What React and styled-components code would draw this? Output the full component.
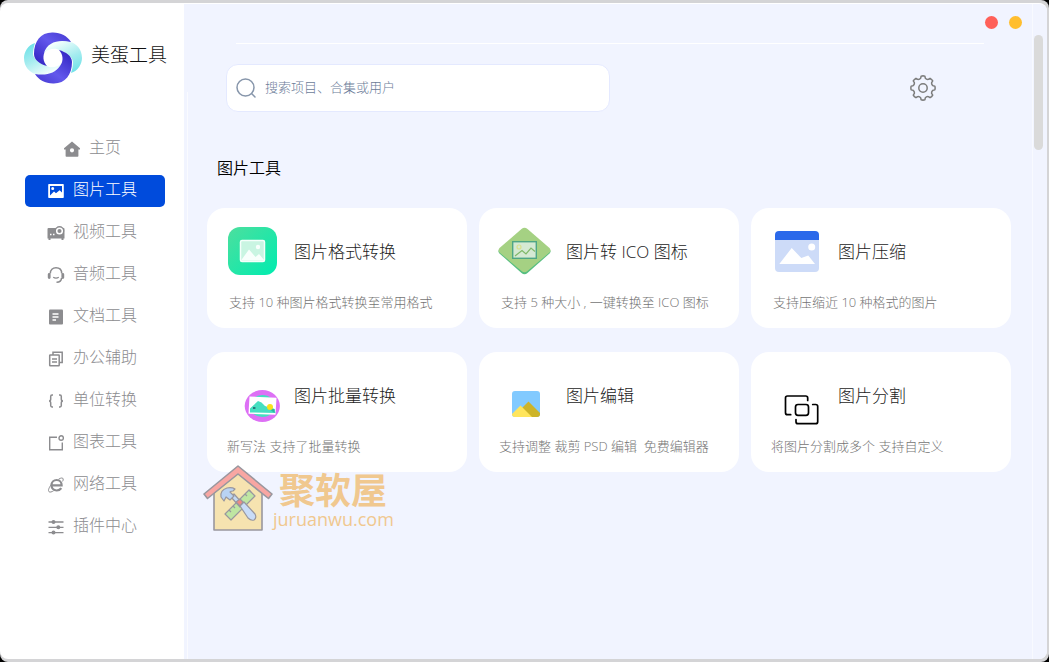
import styled, { createGlobalStyle } from "styled-components";

const GlobalStyle = createGlobalStyle`
  * {
    box-sizing: border-box;
  }
  body {
    margin: 0;
    background: #000;
    font-family: "Open Sans", "Noto Sans CJK SC", sans-serif;
    font-weight: 300;
  }
  button, input {
    font: inherit;
    border: 0;
    padding: 0;
    background: none;
  }
`;

/* sidebar icons */

const HomeIcon = () => (
  <svg width="16" height="16" viewBox="0 0 16 16">
    <path
      fill="currentColor"
      fillRule="evenodd"
      d="M8 .5 16 7.2v1.2h-1.6V15q0 .8-.8.8H2.4q-.8 0-.8-.8V8.400H0V7.200zM8 7.200a2.100 2.100 0 1 0 0 4.200 2.100 2.100 0 0 0 0-4.200z"
    />
  </svg>
);

const PictureIcon = () => (
  <svg width="16" height="16" viewBox="0 0 16 16">
    <path
      fill="currentColor"
      fillRule="evenodd"
      d="M1 1h14q.8 0 .8.8v12.400q0 .8-.8.8H1q-.8 0-.8-.8V1.800Q.200 1 1 1zM2 3v9.500l4-4 2 1.700 3.600-2.900L14 9.500V3zM4.700 3.900a1.500 1.500 0 1 1 0 3 1.500 1.500 0 0 1 0-3z"
    />
  </svg>
);

const VideoIcon = () => (
  <svg width="18" height="16" viewBox="0 0 18 16">
    <path fill="currentColor" d="M1.500 3h15q1 0 1 1v9.500h-1V15h-2v-1.500h-11V15h-2v-1.500h-1V4q0-1 1-1z" />
    <circle cx="12.500" cy="5.800" r="4.800" fill="currentColor" />
    <circle cx="12.500" cy="6" r="2.800" fill="none" stroke="#fff" strokeWidth="1.500" />
    <path stroke="#fff" strokeWidth="1.400" d="M3 9.500h1.500M6 9.500h1.500" />
  </svg>
);

const AudioIcon = () => (
  <svg width="18" height="16" viewBox="0 0 18 16" fill="none" stroke="currentColor">
    <path strokeWidth="1.500" d="M3.300 6.500C3.300 2.800 5.700.8 9 .8s5.700 2 5.700 5.700M14.500 11c0 2.500-1.500 4.200-5 4.200" />
    <path strokeWidth="1.300" d="M6.200 10.200q2.800 1.800 5.600 0" />
    <path strokeWidth="2.800" strokeLinecap="round" d="M2.200 7.300v3.200M15.800 7.300v3.200" />
  </svg>
);

const DocIcon = () => (
  <svg width="16" height="16" viewBox="0 0 16 16">
    <rect x="1" y=".5" width="14" height="15" rx="1" fill="currentColor" />
    <path stroke="#fff" strokeWidth="1.400" d="M4.500 5h6M4.500 8h6M4.500 11h3.500" />
  </svg>
);

const OfficeIcon = () => (
  <svg width="16" height="16" viewBox="0 0 16 16" fill="none" stroke="currentColor" strokeWidth="1.500">
    <path d="M5 4V1.200h9.200v10.300h-3" />
    <rect x="1.700" y="4" width="9.500" height="10.800" rx=".5" />
    <path d="M4 8h5M4 11h5" />
  </svg>
);

const UnitIcon = () => (
  <svg width="16" height="16" viewBox="0 0 16 16" fill="none" stroke="currentColor" strokeWidth="1.500">
    <path d="M5 2H4q-1.300 0-1.300 1.400v2.500Q2.700 8 1 8q1.700 0 1.700 2.100v2.500Q2.700 14 4 14h1M11 2h1q1.300 0 1.300 1.400v2.500Q13.300 8 15 8q-1.700 0-1.700 2.100v2.500Q13.300 14 12 14h-1" />
  </svg>
);

const ChartIcon = () => (
  <svg width="16" height="16" viewBox="0 0 16 16" fill="none" stroke="currentColor" strokeWidth="1.400">
    <path d="M9 2.200H1.700v12.600h12.600V7.500" />
    <circle cx="13.200" cy="3" r="2.200" />
  </svg>
);

const NetIcon = () => (
  <svg width="16" height="16" viewBox="0 0 16 16" fill="none" stroke="currentColor">
    <path strokeWidth="2.200" d="M4 8.300h9.600C13.600 5 11.500 3 8.700 3 5.700 3 3.500 5.200 3.500 8.300s2.200 5.200 5.200 5.200c2 0 3.600-.8 4.600-2.300" />
    <path strokeWidth="1" d="M10.500 2.300C13 .6 15 .6 15.200 2c.1.800-.2 1.600-.6 2.400M3.700 7C.9 10.500-.2 13.600 1 14.700c.9.800 2.700.3 4.700-1" />
  </svg>
);

const PluginIcon = () => (
  <svg width="16" height="16" viewBox="0 0 16 16">
    <path stroke="currentColor" strokeWidth="1.300" d="M.5 3h15M.5 8.300h15M.5 13.600h15" />
    <g fill="currentColor">
      <circle cx="5.500" cy="3" r="2" />
      <circle cx="10.300" cy="8.300" r="2" />
      <circle cx="5.500" cy="13.600" r="2" />
    </g>
  </svg>
);

const Logo = () => (
  <svg width="58" height="52" viewBox="-29 -26 58 52">
    <defs>
      <linearGradient id="aqua" x1="0" y1="0" x2="0.600" y2="1">
        <stop offset="0" stopColor="#62dfe6" />
        <stop offset="0.500" stopColor="#a5ecef" />
        <stop offset="1" stopColor="#f4fffd" />
      </linearGradient>
      <linearGradient id="indigo" x1="1" y1="0" x2="0.200" y2="1">
        <stop offset="0" stopColor="#4438d0" />
        <stop offset="0.450" stopColor="#6258ec" />
        <stop offset="1" stopColor="#3427c4" />
      </linearGradient>
      <g id="half">
        <path fill="url(#aqua)" d="M-18-15C-25-13-29-6-29 0-29 9-23 15-17 16-6 19 6 16 9 5 4 10-3 10-6 8-14 6-20 0-20-4-20-8-19-12-18-15Z" />
        <path fill="url(#indigo)" d="M-19-4C-19-17-12-26 0-25.500 8-25.500 14-22 18-16 6-18-2-15-7-8-11-3-10 4-6 8-13 6-19 2-19-4Z" />
      </g>
    </defs>
    <use href="#half" />
    <use href="#half" transform="rotate(180)" />
  </svg>
);

const polar = (deg, r) => {
  const rad = (deg * Math.PI) / 180;
  return `${(r * Math.cos(rad)).toFixed(2)} ${(r * Math.sin(rad)).toFixed(2)}`;
};

// eight rounded teeth with a small hollow between each two
const gearPath =
  [0, 45, 90, 135, 180, 225, 270, 315]
    .map(
      (a, i) =>
        `${i ? "L" : "M"}${polar(a - 9, 12)} Q${polar(a, 12.4)} ${polar(a + 9, 12)} ` +
        `L${polar(a + 13, 10.2)} Q${polar(a + 22.5, 9)} ${polar(a + 32, 10.2)}`
    )
    .join(" ") + "Z";

const GearIcon = () => (
  <svg width="26" height="26" viewBox="-13 -13 26 26" fill="none" stroke="#7c7c7c" strokeWidth="1.500" strokeLinejoin="round">
    <path d={gearPath} />
    <circle r="4.200" />
  </svg>
);

/* card pictures, all drawn in the same 56x60 slot */

const FormatArt = () => (
  <>
    <defs>
      <linearGradient id="mint" x1="0" y1="0" x2="1" y2="1">
        <stop offset="0" stopColor="#4ddf9e" />
        <stop offset="1" stopColor="#00ecb0" />
      </linearGradient>
    </defs>
    <rect x="3" y="5" width="49" height="48" rx="12" fill="url(#mint)" />
    <rect x="15.500" y="18.500" width="24" height="21" rx="1.500" fill="#c9f5e2" stroke="#f5fffb" strokeWidth="1.500" />
    <path fill="#f8fffc" d="M16 38.500 24 27.500l6.500 7.500 3.500-3 5.500 6.500z" />
    <circle cx="33" cy="25" r="2.200" fill="#f8fffc" />
  </>
);

const IcoArt = () => (
  <>
    <path fill="#55be80" d="M24.500 8q3-2.500 6 0L52.500 27q2 2.500 0 4.500L30.500 51q-3 2.500-6 0L2.500 31.500q-2-2 0-4.500z" />
    <path fill="#a5d183" d="M24.500 7q3-2.500 6 0L52.500 26q2 2.500 0 4.500L30.500 49q-3 2.500-6 0L2.500 30.500q-2-2 0-4.500z" />
    <rect x="15.700" y="19.700" width="23.600" height="16.600" fill="#d5e9d3" stroke="#4fa685" strokeWidth="1.400" />
    <path fill="none" stroke="#7fb868" strokeWidth="1.200" d="m18 34 7-5.500 4 3.500 5-6 4 3.500" />
    <circle cx="22" cy="25" r="2" fill="none" stroke="#d9e08b" strokeWidth="1.200" />
  </>
);

const CompressArt = () => (
  <>
    <rect x="6" y="9" width="44" height="20" rx="4" fill="#2b69ea" />
    <path fill="#cddbf8" d="M6 18h44v28q0 4-4 4H10q-4 0-4-4z" />
    <path fill="#fff" d="M10.300 42 22.700 26l9.600 10 7-2.500L46 42z" />
    <circle cx="42.700" cy="25" r="3.500" fill="#fff" />
  </>
);

const BatchArt = () => (
  <>
    <ellipse cx="37.300" cy="40" rx="17.600" ry="16" fill="#dd70f5" />
    <ellipse cx="37.300" cy="40" rx="12.500" ry="11" fill="#45dfc0" />
    <path fill="#fff" d="m24.500 30.500 27 1.200-1 17-27-1z" />
    <path fill="#45dfc0" d="M25 46.500v-4l8-7.500 3.500 1.500 3.500 3.500 3 1 6.500 2 1 4z" />
    <path fill="#2cb8a2" d="m43 42 6.500 1v4z" />
    <circle cx="45" cy="41" r="3" fill="#f9e11c" />
    <path stroke="#17324d" strokeWidth="1.200" d="M28 42h2.500" />
  </>
);

const EditArt = () => (
  <>
    <rect x="15" y="25" width="28" height="26" rx="3" fill="#82caff" />
    <path fill="#cdb429" d="m23 44 8.500-8.500L43 47v1q0 3-3 3H28z" />
    <path fill="#ffe55c" d="m15 48 8.500-8.500L35 51H18q-3 0-3-3z" />
  </>
);

const SplitArt = () => (
  <g fill="none" stroke="#000" strokeWidth="1.700" strokeLinecap="round">
    <path d="M38.700 34.500V32q0-2-2-2H18.500q-2 0-2 2v14.700q0 2 2 2h3.200" />
    <rect x="26.500" y="38.500" width="13" height="10.800" rx="2.500" />
    <path d="M43.700 38.500h3q2 0 2 2V55.700q0 2-2 2H29q-2 0-2-2V53.500" />
  </g>
);

const House = () => (
  <svg width="70" height="68" viewBox="0 0 70 68" stroke="#99979e" strokeWidth="1.600" strokeLinejoin="round">
    <path fill="#f6e3b0" d="M11 29 35 9l24 20v37H11z" />
    <path fill="#f8a6a2" d="M35 2 1 30l3.500 4.500L35 10l30.500 24.500L69 30z" />
    <g strokeWidth="1.200">
      <path fill="#bfe6a2" d="m22 50 24-24 6 6-24 24z" />
      <path fill="none" d="m26 46 2 2M30 42l2 2M42 30l2 2M46 26l2 2" />
      <path fill="#c3d9f5" d="m28 33 3-3 9 10-3 3z" />
      <path fill="#b9d3f3" d="M18 33q-1-7 6-9 5-1 8 1l-2 2q-2 0-3 1l4 4-4 4-4-3-2 4z" />
      <path fill="#ef8a85" d="m33 38 4-3 3 3-3 4z" />
      <path fill="#c9dcf8" d="m37 42 4-4 11 12q2 4-1 6-3 1-6-2z" />
    </g>
  </svg>
);

const menu = [
  { label: "主页", icon: HomeIcon },
  { label: "图片工具", icon: PictureIcon, active: true },
  { label: "视频工具", icon: VideoIcon },
  { label: "音频工具", icon: AudioIcon },
  { label: "文档工具", icon: DocIcon },
  { label: "办公辅助", icon: OfficeIcon },
  { label: "单位转换", icon: UnitIcon },
  { label: "图表工具", icon: ChartIcon },
  { label: "网络工具", icon: NetIcon },
  { label: "插件中心", icon: PluginIcon },
];

const tools = [
  { title: "图片格式转换", text: "支持 10 种图片格式转换至常用格式", art: FormatArt },
  { title: "图片转 ICO 图标", text: "支持 5 种大小 , 一键转换至 ICO 图标", art: IcoArt },
  { title: "图片压缩", text: "支持压缩近 10 种格式的图片", art: CompressArt },
  { title: "图片批量转换", text: "新写法 支持了批量转换", art: BatchArt, small: true },
  { title: "图片编辑", text: "支持调整 裁剪 PSD 编辑  免费编辑器", art: EditArt, small: true },
  { title: "图片分割", text: "将图片分割成多个 支持自定义", art: SplitArt, small: true },
];

const App = () => {
  return (
    <>
      <GlobalStyle />
      <Desktop>
        <Window>
          <Sidebar>
            <Brand>
              <Logo />
              <BrandName>美蛋工具</BrandName>
            </Brand>
            <Menu>
              {menu.map(({ label, icon: Icon, active }) => (
                <MenuItem key={label} type="button" $active={active}>
                  <IconBox>
                    <Icon />
                  </IconBox>
                  <MenuText>{label}</MenuText>
                </MenuItem>
              ))}
            </Menu>
          </Sidebar>
          <Main>
            <Content>
              <TitleBar>
                <Dot type="button" aria-label="关闭" $color="#ff6059" />
                <Dot type="button" aria-label="最小化" $color="#ffbe2f" />
              </TitleBar>
              <Divider />
              <TopRow>
                <Search>
                  <svg width="20" height="20" viewBox="0 0 20 20" fill="none" stroke="#8796ab" strokeWidth="1.500" strokeLinecap="round">
                    <circle cx="9.500" cy="9.500" r="8.500" />
                    <path d="m15.800 15.800 3.200 3.200" />
                  </svg>
                  <SearchInput type="text" aria-label="搜索" placeholder="搜索项目、合集或用户" />
                </Search>
                <GearButton type="button" aria-label="设置">
                  <GearIcon />
                </GearButton>
              </TopRow>
              <SectionTitle>图片工具</SectionTitle>
              <Grid>
                {tools.map(({ title, text, art: Art, small }) => (
                  <Card key={title}>
                    <CardHead>
                      <svg width="56" height="60" viewBox="0 0 56 60">
                        <Art />
                      </svg>
                      <CardTitle>{title}</CardTitle>
                    </CardHead>
                    <CardText $small={small}>{text}</CardText>
                  </Card>
                ))}
              </Grid>
              <Watermark>
                <House />
                <div>
                  <MarkName>聚软屋</MarkName>
                  <MarkSite>juruanwu.com</MarkSite>
                </div>
              </Watermark>
            </Content>
            <Rail>
              <Thumb />
            </Rail>
          </Main>
        </Window>
      </Desktop>
    </>
  );
};

const Desktop = styled.div`
  display: flex;
  min-height: 100vh;
  padding: 3px 2px 3px 0;
  border-radius: 8px;
  background: #d4d4d6;
`;

const Window = styled.div`
  display: flex;
  flex: 1;
  border-radius: 8px;
  border-top: 1px solid #fff;
  background: #fff;
  overflow: hidden;
`;

const Sidebar = styled.aside`
  flex: none;
  width: 184px;
  padding: 28px 0 0 24px;
`;

const Brand = styled.div`
  display: flex;
  align-items: center;
  gap: 9px;
  height: 52px;
`;

const BrandName = styled.span`
  padding-bottom: 6px;
  font-size: 19px;
  line-height: 24px;
  color: #111;
  white-space: nowrap;
`;

const Menu = styled.nav`
  display: flex;
  flex-direction: column;
  gap: 10px;
  width: 141px;
  padding: 49px 0 0 1px;
`;

const MenuItem = styled.button`
  display: flex;
  align-items: center;
  justify-content: center;
  gap: 9px;
  height: 32px;
  padding-right: 5px;
  border-radius: 5px;
  font-size: 16px;
  color: ${(props) => (props.$active ? "#fff" : "#8c8c8f")};
  background: ${(props) => (props.$active ? "#004bdc" : "transparent")};
`;

const IconBox = styled.span`
  display: flex;
  justify-content: center;
  width: 16px;
  svg {
    flex: none;
  }
`;

const MenuText = styled.span`
  padding-bottom: 4px;
  line-height: 24px;
`;

const Main = styled.main`
  display: flex;
  flex: 1;
  min-width: 0;
  background: linear-gradient(#fafbff, #fafbff) 3px 88px / 1px 100% no-repeat #f1f4ff;
`;

const Content = styled.div`
  flex: 1;
  min-width: 0;
`;

const TitleBar = styled.div`
  display: flex;
  justify-content: flex-end;
  gap: 11px;
  padding: 12px 10px 14px;
`;

const Dot = styled.button`
  width: 13px;
  height: 13px;
  border-radius: 50%;
  background: ${(props) => props.$color};
`;

const Divider = styled.div`
  height: 1px;
  margin: 0 48px 0 52px;
  background: #fff;
`;

const TopRow = styled.div`
  display: flex;
  align-items: center;
  justify-content: space-between;
  padding: 20px 96px 0 42px;
`;

const Search = styled.label`
  display: flex;
  align-items: center;
  gap: 9px;
  width: 384px;
  height: 48px;
  padding: 0 9px;
  border: 1px solid #e4e9ff;
  border-radius: 12px;
  background: #fff;
  svg {
    flex: none;
  }
`;

const SearchInput = styled.input`
  flex: 1;
  min-width: 0;
  padding-bottom: 2px;
  font-size: 13px;
  line-height: 20px;
  outline: none;
  &::placeholder {
    color: #6b7c98;
    opacity: 1;
  }
`;

const GearButton = styled.button`
  display: flex;
`;

const SectionTitle = styled.h2`
  margin: 44px 0 0 33px;
  font-size: 16px;
  line-height: 24px;
  font-weight: 350;
  color: #000;
`;

const Grid = styled.div`
  display: grid;
  grid-template-columns: repeat(auto-fill, minmax(240px, 1fr));
  gap: 24px 12px;
  padding: 28px 21px 0 23px;
`;

const Card = styled.article`
  padding: 14px 8px 17px 18px;
  border-radius: 18px;
  background: #fff;
`;

const CardHead = styled.div`
  display: flex;
  align-items: center;
  gap: 13px;
  svg {
    flex: none;
  }
`;

const CardTitle = styled.h3`
  margin: 0;
  font-size: 17px;
  line-height: 24px;
  font-weight: 300;
  color: #1c1c1c;
`;

const CardText = styled.p`
  margin: 11px 0 0;
  padding-left: ${(props) => (props.$small ? 2 : 4)}px;
  font-size: 13px;
  line-height: 18px;
  color: #747474;
  white-space: pre-wrap;
`;

const Watermark = styled.div`
  display: flex;
  margin: -8px 0 0 19px;
  color: #f0c88f;
`;

const MarkName = styled.div`
  padding: 6px 0 0 6px;
  font-family: "Noto Sans CJK SC", sans-serif;
  font-size: 36px;
  line-height: 36px;
  font-weight: 700;
`;

const MarkSite = styled.div`
  padding-top: 2px;
  font-size: 18px;
  line-height: 22px;
  font-weight: 500;
`;

const Rail = styled.div`
  flex: none;
  width: 15px;
  padding: 31px 4px 0 1px;
  border-left: 1px solid #f8faff;
`;

const Thumb = styled.div`
  height: 115px;
  border-radius: 5px;
  background: #dadada;
`;

export default App;
